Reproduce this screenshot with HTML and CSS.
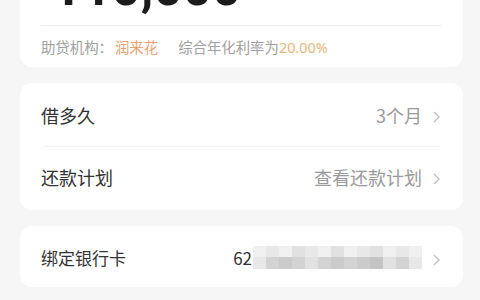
FILE: index.html
```html
<html lang="zh-CN">
  <head>
    <meta charset="UTF-8" />
    <meta name="viewport" content="width=device-width, initial-scale=1.0" />
    <title>借款确认</title>
    <link rel="stylesheet" href="styles.css">
  </head>
  <body>
    <div class="page">
      <!-- amount card -->
      <div class="card amount-card">
        <div class="amount">¥10,000</div>
        <div class="line"></div>
        <div class="loan-info">
          <span>助贷机构：</span><span class="org">润来花</span>
          <span class="rate-label">综合年化利率为</span><span class="rate">20.00%</span>
        </div>
      </div>

      <!-- loan options -->
      <div class="card list-card">
        <div class="row">
          <span class="label">借多久</span>
          <span class="value">3个月</span>
          <svg class="arrow" width="7" height="12" viewBox="0 0 7 12"><polyline points="1,1 6,6 1,11" /></svg>
        </div>
        <div class="row-line"></div>
        <div class="row row-last">
          <span class="label">还款计划</span>
          <span class="value">查看还款计划</span>
          <svg class="arrow" width="7" height="12" viewBox="0 0 7 12"><polyline points="1,1 6,6 1,11" /></svg>
        </div>
      </div>

      <!-- bank card -->
      <div class="card list-card">
        <div class="row bank-row">
          <span class="label">绑定银行卡</span>
          <span class="card-no">62</span>
          <span class="mosaic">
            <span class="m-top">
              <i class="g1"></i><i class="g2"></i><i class="g1"></i><i class="g3"></i><i class="g2"></i><i class="g1"></i><i class="g3"></i><i class="g1"></i><i class="g2"></i><i class="g3"></i><i class="g1"></i><i class="g2"></i><i class="g1"></i>
            </span>
            <span class="m-bottom">
              <i class="g2"></i><i class="g4"></i><i class="g5"></i><i class="g4"></i><i class="g3"></i><i class="g4"></i><i class="g5"></i><i class="g4"></i><i class="g5"></i><i class="g6"></i><i class="g3"></i><i class="g4"></i><i class="g2"></i>
            </span>
          </span>
          <svg class="arrow" width="7" height="12" viewBox="0 0 7 12"><polyline points="1,1 6,6 1,11" /></svg>
        </div>
      </div>
    </div>
  </body>
</html>
```

FILE: styles.css
```css
/* body styles */
body {
  margin: 0;
  padding: 0;
  background-color: #f6f6f6;
  font-family: "Noto Sans CJK SC", "Noto Sans", sans-serif;
  overflow: hidden;
}

.page {
  padding: 0 17px 0 20px;
}

/* card styles */
.card {
  background-color: #fff;
  border-radius: 12px;
  margin-bottom: 16px;
}

.amount-card {
  margin-top: -57px;
  padding: 20px 21px 10px;
}

.amount {
  font-family: Roboto, "Liberation Sans", sans-serif;
  font-weight: bold;
  font-size: 51px;
  line-height: 50px;
  color: #1c1c1c;
  margin-left: 14px;
}

.line {
  height: 1px;
  background-color: #f1f1f1;
  margin-top: 12px;
}

.loan-info {
  display: flex;
  align-items: baseline;
  height: 20px;
  margin-top: 11px;
  font-size: 14.4px;
  line-height: 20px;
  color: #a0a0a0;
}

.loan-info .org {
  color: #ee9f6c;
  margin-left: 2px;
}

.loan-info .rate-label {
  margin-left: 20px;
}

.loan-info .rate {
  color: #e6b67a;
  font-family: "Noto Sans", sans-serif;
}

/* list rows */
.list-card {
  padding: 0 23px 0 21px;
}

.row {
  display: flex;
  align-items: center;
  height: 63px;
}

.row-last {
  height: 60px;
  padding-bottom: 3px;
}

.row .label {
  font-size: 18px;
  color: #333;
}

.row .value {
  margin-left: auto;
  font-size: 18px;
  color: #9a9a9a;
}

.arrow {
  margin-left: 11px;
  margin-top: 4px;
}

.arrow polyline {
  fill: none;
  stroke: #bdbdbd;
  stroke-width: 1.3;
}

.row-line {
  height: 1px;
  background-color: #f2f2f2;
  margin-left: 2px;
}

.bank-row {
  height: 61px;
  padding-top: 2px;
  box-sizing: border-box;
}

.bank-row .label {
  font-size: 17px;
}

.card-no {
  margin-left: auto;
  font-size: 17px;
  color: #333;
}

/* blurred card number */
.mosaic {
  display: flex;
  flex-direction: column;
  width: 169px;
  margin-left: 1px;
}

.m-top,
.m-bottom {
  display: flex;
  height: 11px;
}

.m-bottom {
  height: 12px;
}

.mosaic i {
  flex: 1;
}

.g1 { background-color: #f0f0f0; }
.g2 { background-color: #e8e8e8; }
.g3 { background-color: #e1e1e1; }
.g4 { background-color: #d3d3d3; }
.g5 { background-color: #cbcbcb; }
.g6 { background-color: #c4c4c4; }
```
